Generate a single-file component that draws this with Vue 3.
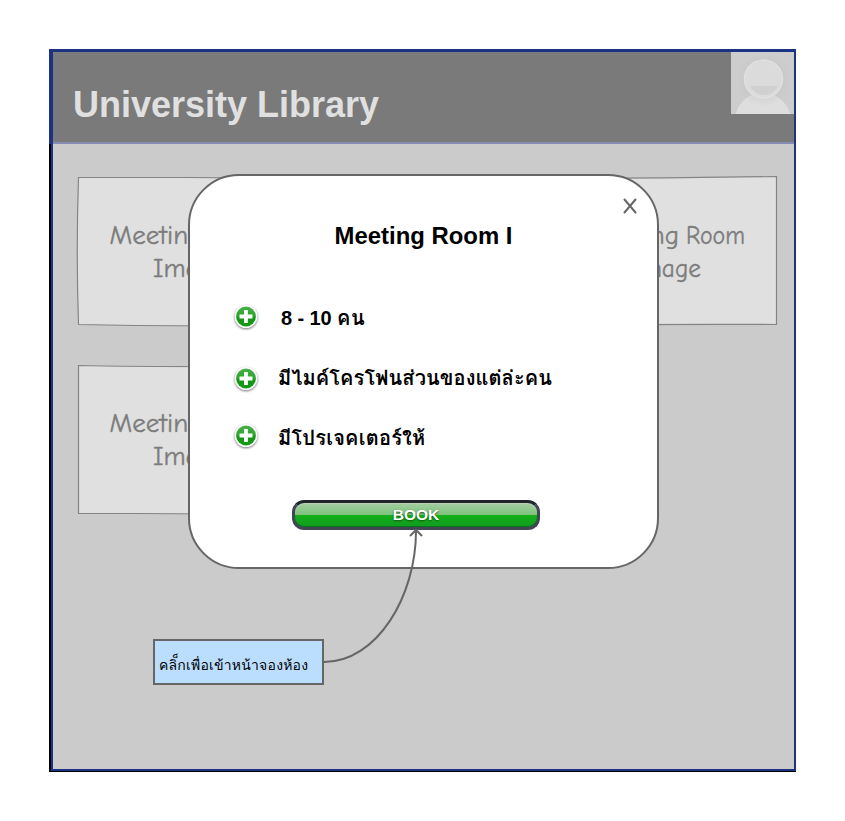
<script setup>
const rooms = [
  { id: 1, slot: 'first', nameX: 32.5, imageX: 76, imageWidth: 74, outline: 'M1.5 1.5 L112 1.5 L223 2.5 V150.5 L60 149.500 L1.5 148.5 Q-1 75 1.5 1.5Z' },
  { id: 3, slot: 'last', nameX: 34, imageX: 79, imageWidth: 70, outline: 'M1 1.5 Q70 3 224.5 .5 V148.5 Q110 148 1 149.5Z' },
  { id: 4, slot: 'first', nameX: 32.5, imageX: 76, imageWidth: 74, outline: 'M1.5 1.5 Q60 3 223 2.5 V150.5 L60 149.5 L1.5 149.5Z' },
]
const features = [
  { count: '8 - 10', label: 'คน' },
  { label: 'มีไมค์โครโฟนส่วนของแต่ล่ะคน' },
  { label: 'มีโปรเจคเตอร์ให้' },
]
</script>

<template>
  <div class="page">
    <main class="screen">
      <header class="header">
        <h1>University Library</h1>
        <svg class="avatar" viewBox="0 0 63 62">
          <defs>
            <radialGradient id="halo"><stop offset=".7" stop-color="#bdbdbd" /><stop offset="1" stop-color="#bdbdbd" stop-opacity="0" /></radialGradient>
          </defs>
          <rect width="63" height="62" fill="#cdcdcd" />
          <path d="M4.500 62C9 48 19 41 32 41S54 48 59.500 62Z" fill="#dedede" />
          <circle cx="32.500" cy="28" r="27" fill="url(#halo)" opacity=".25" />
          <circle cx="32.500" cy="27" r="19.800" fill="#dfdfdf" />
          <circle cx="32.500" cy="27" r="18" fill="#dbdbdb" />
          <path d="M19 34H47Q42 43 33 43T19 34Z" fill="#d0d0d0" />
        </svg>
      </header>
      <section class="rooms">
        <svg v-for="room in rooms" :key="room.id" class="room" :class="room.slot" viewBox="0 0 225 151">
          <path :d="room.outline" fill="#e0e0e0" stroke="#848484" stroke-width="1.200" />
          <text :x="room.nameX" y="67.500" textLength="93" lengthAdjust="spacingAndGlyphs">Meeting</text>
          <text x="134" y="67.500" textLength="59" lengthAdjust="spacingAndGlyphs">Room</text>
          <text :x="room.imageX" y="100.500" :textLength="room.imageWidth" lengthAdjust="spacingAndGlyphs">Image</text>
        </svg>
      </section>
    </main>

    <section class="dialog">
      <svg class="close" viewBox="0 0 14 16"><path d="M1.500 1.500L12.500 14.500M12.500 1.500L1.500 14.500" /></svg>
      <h2>Meeting Room I</h2>
      <ul>
        <li v-for="(feature, i) in features" :key="feature.label" :class="'feature' + (i + 1)">
          <svg class="plus" viewBox="0 0 28 28">
            <defs>
              <linearGradient id="green" x2="0" y2="1"><stop stop-color="#47b047" /><stop offset=".5" stop-color="#2ba52b" /><stop offset=".52" stop-color="#149614" /><stop offset="1" stop-color="#149b14" /></linearGradient>
            </defs>
            <circle cx="14" cy="13.500" r="11.500" fill="#fff" />
            <circle cx="14" cy="13.500" r="9.900" fill="url(#green)" />
            <path d="M14 7V20M7.500 13.500H20.500" stroke="#fff" stroke-width="3.800" />
          </svg>
          <p><span v-if="feature.count" class="count">{{ feature.count }}</span>{{ feature.label }}</p>
        </li>
      </ul>
      <button>BOOK</button>
    </section>

    <svg class="arrow" viewBox="0 0 110 140">
      <path d="M4 134C57 134 96 68 96 3M90 8L96 2L102 8" />
    </svg>
    <div class="note"><span>คลิ็กเพื่อเข้าหน้าจองห้อง</span></div>
  </div>
</template>

<style>
body { margin: 0; background: #fff; }
</style>

<style scoped>
.page {
  position: relative;
  box-sizing: border-box;
  width: 845px;
  height: 821px;
  padding: 49px;
  font-family: "Liberation Sans", Tahoma, Loma, Waree, Garuda, "Noto Sans Thai Looped", "Noto Sans Thai", sans-serif;
}
.screen {
  box-sizing: border-box;
  width: 747px;
  height: 723px;
  background: #cbcbcb;
  border-left: 2px solid #000;
  border-bottom: 1px solid #000;
  box-shadow: inset 2px 0 #1c3283, inset -2px -2px #1c3283;
}
.header {
  box-sizing: border-box;
  display: flex;
  justify-content: space-between;
  height: 95px;
  margin-left: -2px;
  border: solid #1c3283;
  border-width: 3px 2px 0 4px;
  background: #7a7a7a;
  box-shadow: inset 0 -2px #858bb1;
}
h1 {
  margin: 31px 0 0 20px;
  color: #e0e0e0;
  font-size: 36px;
  line-height: 43px;
  white-space: nowrap;
}
.avatar { width: 63px; height: 62px; }
.rooms {
  display: grid;
  grid-template-columns: repeat(3, 225px);
  grid-auto-rows: 151px;
  row-gap: 37px;
  column-gap: 12.500px;
  margin: 32px 0 0 26px;
}
.room { width: 225px; height: 151px; overflow: visible; }
.first { grid-column: 1; }
.last { grid-column: 3; }
.room text {
  fill: #7c7c7c;
  stroke: #7c7c7c;
  stroke-width: .35px;
  font-family: "Comic Sans MS", "Comic Neue", cursive;
  font-size: 25.500px;
}
.dialog {
  position: absolute;
  left: 188px;
  top: 174px;
  box-sizing: border-box;
  width: 471px;
  height: 395px;
  border: 2px solid #666;
  border-radius: 51px;
  background: #fff;
  display: flex;
  flex-direction: column;
  align-items: center;
}
.close {
  align-self: flex-end;
  flex: none;
  width: 14px;
  height: 16px;
  margin: 22px 20px 0 0;
  fill: none;
  stroke: #666;
  stroke-width: 2;
  stroke-linecap: round;
}
h2 { margin: 8px 0 0; font-size: 23.900px; line-height: 28px; }
ul {
  list-style: none;
  width: 100%;
  margin: 51px 0 0;
  padding: 0;
}
li {
  display: flex;
  align-items: center;
  height: 32px;
  margin-bottom: 28px;
  padding-left: 42px;
}
.plus {
  width: 28px;
  height: 28px;
  filter: drop-shadow(0 1.500px 1px #777);
}
p {
  margin: 3px 0 0 18px;
  font-size: 20px;
  font-weight: bold;
  letter-spacing: .1px;
  line-height: 23px;
  white-space: nowrap;
}
.feature1 p { margin-left: 21px; letter-spacing: .5px; }
.count { margin-right: 5.500px; letter-spacing: -.1px; }
.feature2 .plus { margin-top: 4px; }
.feature3 .plus { margin-top: -3px; }
.feature3 p { letter-spacing: .2px; }
button {
  box-sizing: border-box;
  flex: none;
  width: 248px;
  height: 30px;
  margin: 19px 15px 0 0;
  padding: 0;
  border: 3px solid #414554;
  border-top-color: #22242c;
  border-radius: 12px;
  background: linear-gradient(#a6cea2, #7fc37d 48%, #12b018 52%, #109c20);
  box-shadow: inset 0 1px #bad1b7, inset 0 -1px #08731c;
  color: #fff;
  font: bold 15.500px/24px "Liberation Sans", sans-serif;
  text-shadow: 0 1px 2px #164e16;
}
.arrow {
  position: absolute;
  left: 320px;
  top: 528px;
  width: 110px;
  height: 140px;
  fill: none;
  stroke: #666;
  stroke-width: 2;
}
.note {
  position: absolute;
  left: 153px;
  top: 639px;
  box-sizing: border-box;
  width: 171px;
  height: 46px;
  border: 2px solid #666;
  background: #bbdeff;
  padding: 13px 0 0 4px;
  font-size: 14px;
  letter-spacing: .2px;
  line-height: 22px;
  white-space: nowrap;
}
</style>
